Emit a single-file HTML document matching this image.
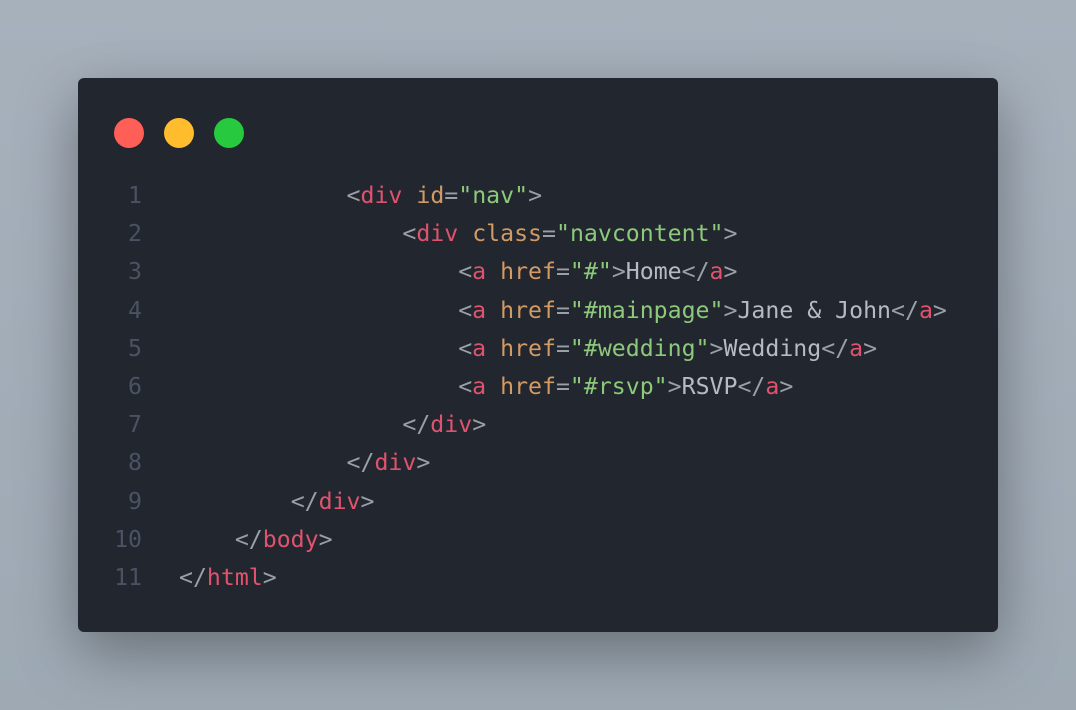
<!DOCTYPE html>
<html><head><style>
html,body{margin:0;padding:0;}
body{width:1076px;height:710px;background:linear-gradient(180deg,#a7b1bc,#9ea9b4);position:relative;overflow:hidden;}
.card{position:absolute;left:78px;top:78px;width:920px;height:554px;background:#22262e;border-radius:6px;box-shadow:0 20px 60px rgba(0,0,0,0.35);}
.dot{position:absolute;top:40px;width:30px;height:30px;border-radius:50%;}
.code{position:absolute;left:0;top:99px;width:920px;height:440px;font-family:"DejaVu Sans Mono","Liberation Mono",monospace;font-size:23.2px;line-height:38.2px;white-space:pre;}
.ln{position:absolute;left:0;top:0;width:64px;text-align:right;color:#4b5263;}
.c{position:absolute;left:101px;top:0;color:#b5bac6;}
.p{color:#9aa0a8}.t{color:#e0536e}.a{color:#d29a64}.s{color:#8cc97a}
</style></head><body>
<div class="card">
<div class="dot" style="left:36px;background:#ff5f56"></div>
<div class="dot" style="left:86px;background:#ffbd2e"></div>
<div class="dot" style="left:136px;background:#27c93f"></div>
<div class="code"><div class="ln">1
2
3
4
5
6
7
8
9
10
11</div><div class="c">            <span class="p">&lt;</span><span class="t">div</span> <span class="a">id</span><span class="p">=</span><span class="s">"nav"</span><span class="p">&gt;</span>
                <span class="p">&lt;</span><span class="t">div</span> <span class="a">class</span><span class="p">=</span><span class="s">"navcontent"</span><span class="p">&gt;</span>
                    <span class="p">&lt;</span><span class="t">a</span> <span class="a">href</span><span class="p">=</span><span class="s">"#"</span><span class="p">&gt;</span>Home<span class="p">&lt;/</span><span class="t">a</span><span class="p">&gt;</span>
                    <span class="p">&lt;</span><span class="t">a</span> <span class="a">href</span><span class="p">=</span><span class="s">"#mainpage"</span><span class="p">&gt;</span>Jane &amp; John<span class="p">&lt;/</span><span class="t">a</span><span class="p">&gt;</span>
                    <span class="p">&lt;</span><span class="t">a</span> <span class="a">href</span><span class="p">=</span><span class="s">"#wedding"</span><span class="p">&gt;</span>Wedding<span class="p">&lt;/</span><span class="t">a</span><span class="p">&gt;</span>
                    <span class="p">&lt;</span><span class="t">a</span> <span class="a">href</span><span class="p">=</span><span class="s">"#rsvp"</span><span class="p">&gt;</span>RSVP<span class="p">&lt;/</span><span class="t">a</span><span class="p">&gt;</span>
                <span class="p">&lt;/</span><span class="t">div</span><span class="p">&gt;</span>
            <span class="p">&lt;/</span><span class="t">div</span><span class="p">&gt;</span>
        <span class="p">&lt;/</span><span class="t">div</span><span class="p">&gt;</span>
    <span class="p">&lt;/</span><span class="t">body</span><span class="p">&gt;</span>
<span class="p">&lt;/</span><span class="t">html</span><span class="p">&gt;</span></div></div>
</div>
</body></html>
